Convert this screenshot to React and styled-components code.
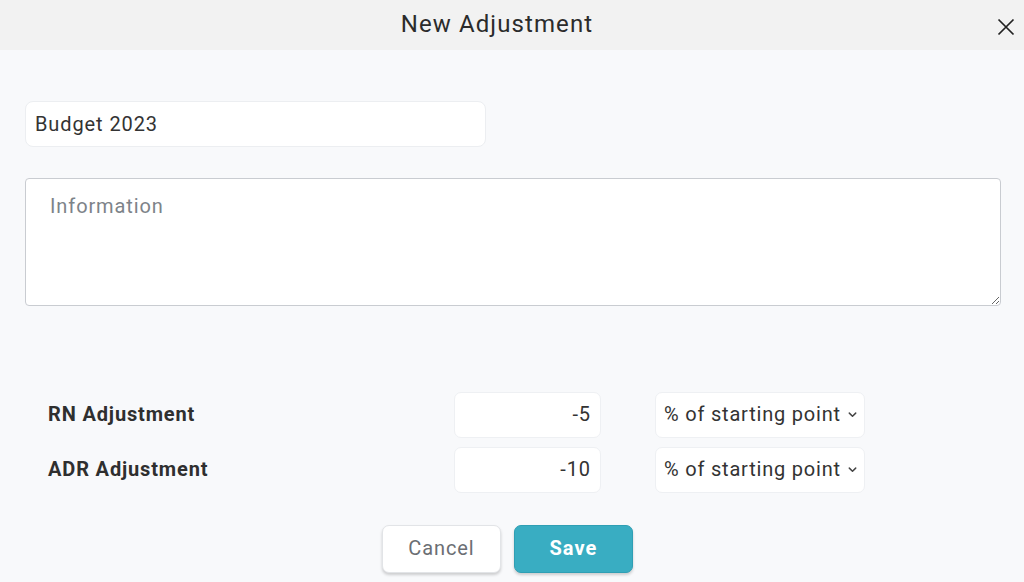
import React from 'react';
import styled, { createGlobalStyle } from 'styled-components';

const GlobalStyle = createGlobalStyle`
  html, body {
    margin: 0;
    padding: 0;
    background: #f8f9fb;
    font-family: Roboto, "Liberation Sans", sans-serif;
  }
  * { box-sizing: border-box; }
`;

const Modal = styled.div`
  width: 1024px;
  height: 582px;
  overflow: hidden;
  background: #f8f9fb;
`;

const Header = styled.div`
  position: relative;
  height: 50px;
  background: #f2f2f2;
  display: flex;
  align-items: center;
  justify-content: center;
`;

const Title = styled.h1`
  margin: 0 0 3px -30px;
  font-size: 24px;
  font-weight: 400;
  color: #2b2b2b;
  letter-spacing: 1.1px;
`;

const CloseButton = styled.button`
  position: absolute;
  right: 7px;
  top: 16px;
  width: 22px;
  height: 22px;
  padding: 0;
  border: none;
  background: transparent;
  cursor: pointer;
  display: flex;
  align-items: center;
  justify-content: center;
`;

const Body = styled.div`
  padding: 51px 23px 0 25px;
  display: flex;
  flex-direction: column;
`;

const NameInput = styled.input`
  width: 461px;
  height: 46px;
  border: 1px solid #eceef1;
  border-radius: 8px;
  background: #fff;
  padding: 0 9px;
  font-family: Roboto, sans-serif;
  font-size: 20px;
  letter-spacing: 0.9px;
  color: #333;
  outline: none;
`;

const InfoArea = styled.textarea`
  margin-top: 31px;
  width: 976px;
  height: 128px;
  border: 1px solid #c9ccd1;
  border-radius: 4px;
  background: #fff;
  padding: 15px 24px;
  font-family: Roboto, sans-serif;
  font-size: 20px;
  letter-spacing: 0.9px;
  color: #333;
  outline: none;
  resize: vertical;

  &::placeholder {
    color: #7d8389;
  }
`;

const Rows = styled.div`
  margin-top: 86px;
  padding-left: 23px;
  display: flex;
  flex-direction: column;
  gap: 9px;
`;

const Row = styled.div`
  display: flex;
  align-items: center;
  height: 46px;
`;

const Label = styled.div`
  width: 406px;
  font-size: 20px;
  font-weight: 700;
  letter-spacing: 0.85px;
  color: #2f2f2f;
  margin-top: -2px;
`;

const NumberInput = styled.input`
  width: 147px;
  height: 46px;
  border: 1px solid #eef0f3;
  border-radius: 7px;
  background: #fff;
  padding: 0 9px 2px;
  text-align: right;
  font-family: Roboto, sans-serif;
  font-size: 20px;
  letter-spacing: 0.9px;
  color: #333;
  outline: none;
`;

const SelectBox = styled.div`
  margin-left: 54px;
  width: 210px;
  height: 46px;
  border: 1px solid #eef0f3;
  border-radius: 7px;
  background: #fff;
  padding: 0 6px 2px 8px;
  display: flex;
  align-items: center;
  justify-content: space-between;
  font-size: 20px;
  letter-spacing: 0.8px;
  color: #333;
  white-space: nowrap;
`;

const Actions = styled.div`
  margin-top: 32px;
  padding-right: 11px;
  display: flex;
  justify-content: center;
  gap: 13px;
`;

const Button = styled.button`
  width: 119px;
  height: 48px;
  border-radius: 7px;
  padding: 0 0 2px;
  font-family: Roboto, sans-serif;
  font-size: 20px;
  letter-spacing: ${(p) => (p.$primary ? '1.1px' : '0.9px')};
  cursor: pointer;
  border: 1px solid ${(p) => (p.$primary ? '#2f9fb4' : '#e2e4e7')};
  background: ${(p) => (p.$primary ? '#39adc2' : '#fff')};
  color: ${(p) => (p.$primary ? '#fff' : '#6b6e73')};
  font-weight: ${(p) => (p.$primary ? 700 : 400)};
  box-shadow: 0 2px 3px rgba(0, 0, 0, 0.18);
`;

const Chevron = () => (
  <svg width="11" height="11" viewBox="0 0 12 12" fill="none">
    <path d="M2.5 4.5L6 8l3.5-3.5" stroke="#444" strokeWidth="1.6" strokeLinecap="round" strokeLinejoin="round" />
  </svg>
);

const adjustments = [
  { label: 'RN Adjustment', value: '-5' },
  { label: 'ADR Adjustment', value: '-10' },
];

export default function App() {
  return (
    <Modal>
      <GlobalStyle />
      <Header>
        <Title>New Adjustment</Title>
        <CloseButton aria-label="Close">
          <svg width="18" height="18" viewBox="0 0 18 18">
            <path d="M1.5 1.5L16.5 16.5M16.5 1.5L1.5 16.5" stroke="#222" strokeWidth="1.7" />
          </svg>
        </CloseButton>
      </Header>
      <Body>
        <NameInput defaultValue="Budget 2023" />
        <InfoArea placeholder="Information" />
        <Rows>
          {adjustments.map((a) => (
            <Row key={a.label}>
              <Label>{a.label}</Label>
              <NumberInput defaultValue={a.value} />
              <SelectBox>
                <span>% of starting point</span>
                <Chevron />
              </SelectBox>
            </Row>
          ))}
        </Rows>
        <Actions>
          <Button>Cancel</Button>
          <Button $primary>Save</Button>
        </Actions>
      </Body>
    </Modal>
  );
}
